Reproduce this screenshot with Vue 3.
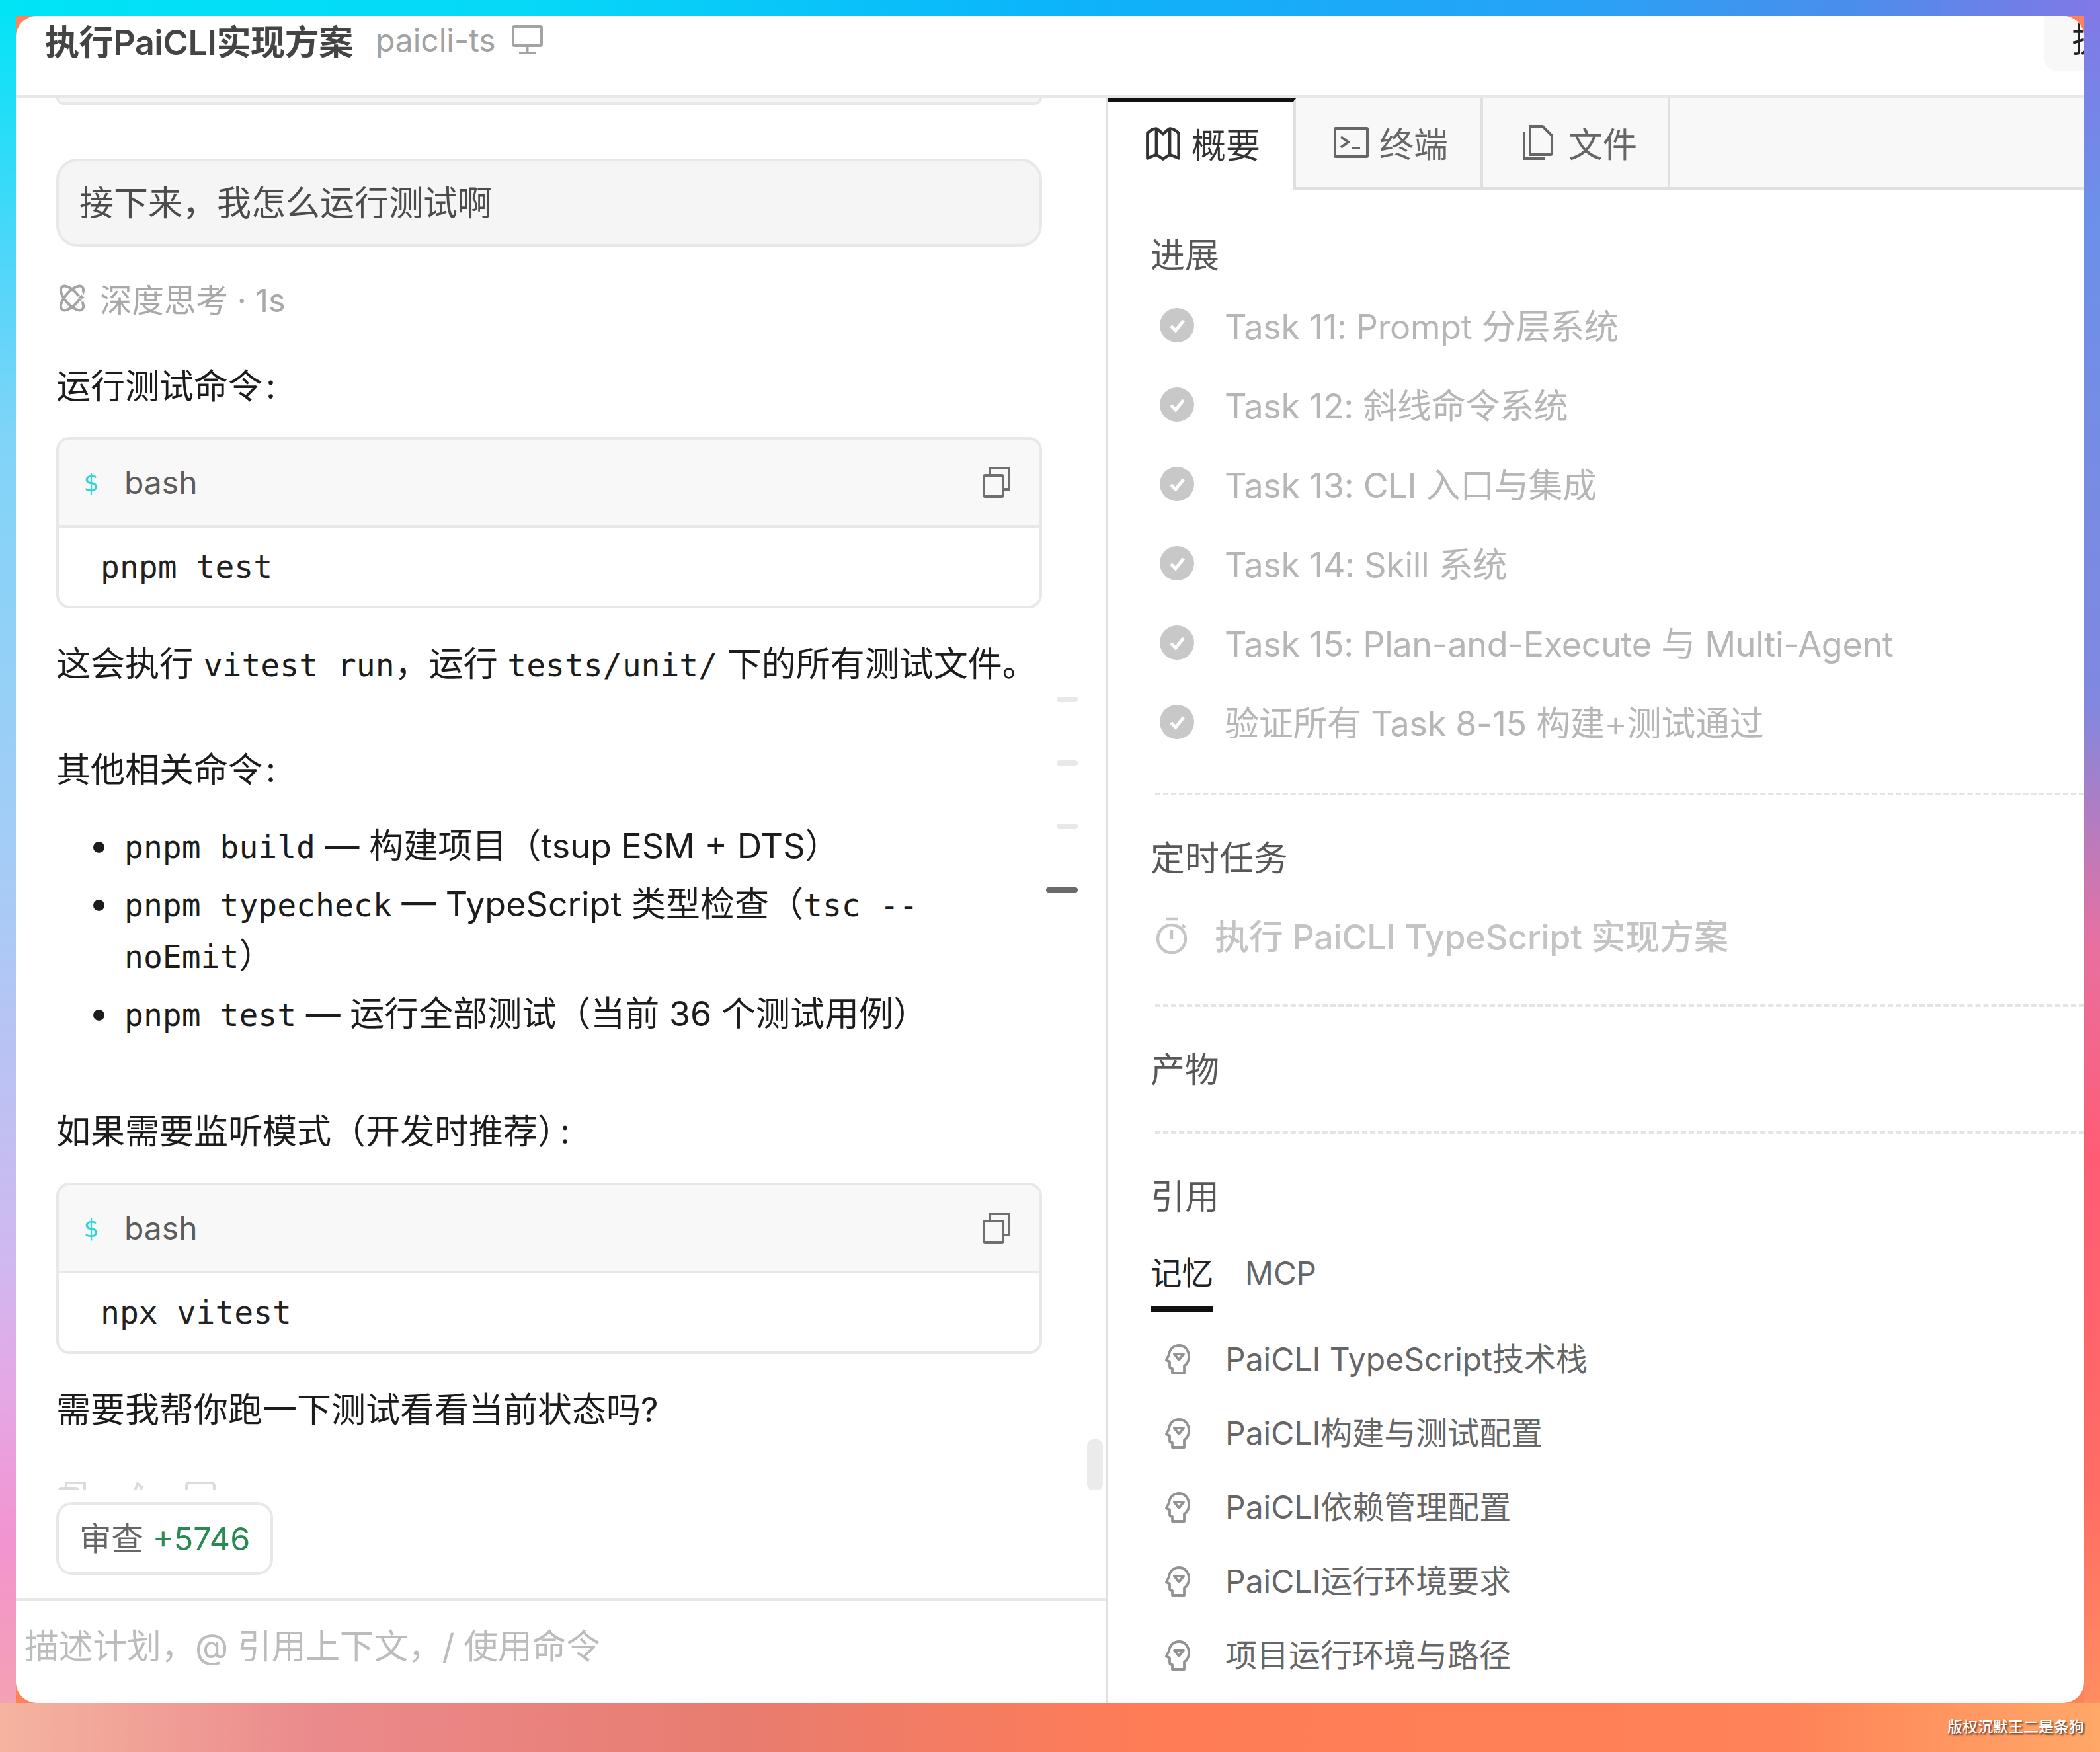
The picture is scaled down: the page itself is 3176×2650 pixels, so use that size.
<script setup>
const tasks = [
  'Task 11: Prompt 分层系统',
  'Task 12: 斜线命令系统',
  'Task 13: CLI 入口与集成',
  'Task 14: Skill 系统',
  'Task 15: Plan-and-Execute 与 Multi-Agent',
  '验证所有 Task 8-15 构建+测试通过',
]
const memories = [
  'PaiCLI TypeScript技术栈',
  'PaiCLI构建与测试配置',
  'PaiCLI依赖管理配置',
  'PaiCLI运行环境要求',
  '项目运行环境与路径',
]
const marks = [
  { id: 1, dark: false },
  { id: 2, dark: false },
  { id: 3, dark: false },
  { id: 4, dark: true },
]
const codeBlocks = { first: 'pnpm test', second: 'npx vitest' }
</script>

<template>
  <div class="page">
    <div class="window">
      <header class="header">
        <div class="heading">
          <span class="title">执行PaiCLI实现方案</span>
          <span class="project">paicli-ts</span>
          <svg class="monitor" viewBox="0 0 47 44" fill="none" stroke="#a4a4a4" stroke-width="4">
            <rect x="2" y="2" width="43" height="29" rx="2" />
            <path d="M23.5 31v11M11 42h25" />
          </svg>
        </div>
        <div class="run-btn">执行方案</div>
      </header>

      <div class="body">
        <section class="left">
          <div class="scroller">
            <div class="prev-tail"></div>
            <div class="bubble">接下来，我怎么运行测试啊</div>
            <div class="thinking">
              <svg class="think-icon" viewBox="0 0 44 42" fill="none" stroke="#a4a4a4" stroke-width="4">
                <ellipse cx="20" cy="21" rx="10" ry="23" transform="rotate(-42 20 21)" />
                <ellipse cx="20" cy="21" rx="10" ry="23" transform="rotate(42 20 21)" />
                <path d="M35 10c1 5 3 8 8 9-5 1-7 4-8 9-1-5-3-8-8-9 5-1 7-4 8-9z" fill="#fff" stroke="none" />
                <path d="M34 14c.6 3 2 5 5 5.500-3 .5-4.400 2.500-5 5.500-.6-3-2-5-5-5.500 3-.5 4.400-2.500 5-5.500z" fill="#a4a4a4" stroke="none" />
              </svg>
              <span>深度思考 · 1s</span>
            </div>
            <p class="para para-first">运行测试命令<span class="colon">:</span></p>
            <div class="code">
              <div class="code-head">
                <span class="dollar">$</span>
                <span class="lang">bash</span>
                <svg class="copy" viewBox="0 0 42 47" fill="none" stroke="#6f6f6f" stroke-width="4">
                  <rect x="2" y="13" width="29" height="32" rx="2" />
                  <path d="M11 13V2h29v32h-9" />
                </svg>
              </div>
              <div class="code-body">{{ codeBlocks.first }}</div>
            </div>
            <p class="para para-after-code">这会执行 <code>vitest run</code>，运行 <code>tests/unit/</code> 下的所有测试文件。</p>
            <p class="para para-section">其他相关命令<span class="colon">:</span></p>
            <ul class="list">
              <li><code>pnpm build</code> — 构建项目（tsup ESM + DTS）</li>
              <li><code>pnpm typecheck</code> — TypeScript 类型检查（<code>tsc --noEmit</code>）</li>
              <li><code>pnpm test</code> — 运行全部测试（当前 36 个测试用例）</li>
            </ul>
            <p class="para para-watch">如果需要监听模式（开发时推荐）<span class="colon-tight">:</span></p>
            <div class="code code-second">
              <div class="code-head">
                <span class="dollar">$</span>
                <span class="lang">bash</span>
                <svg class="copy" viewBox="0 0 42 47" fill="none" stroke="#6f6f6f" stroke-width="4">
                  <rect x="2" y="13" width="29" height="32" rx="2" />
                  <path d="M11 13V2h29v32h-9" />
                </svg>
              </div>
              <div class="code-body">{{ codeBlocks.second }}</div>
            </div>
            <p class="para para-after-code">需要我帮你跑一下测试看看当前状态吗?</p>
            <div class="actions">
              <svg class="act act-a" viewBox="0 0 42 42" fill="none" stroke="#cfcfcf" stroke-width="4"><rect x="2" y="10" width="28" height="30" rx="3" /><path d="M12 10V2h28v28h-8" /></svg>
              <svg class="act act-b" viewBox="0 0 36 42" fill="none" stroke="#cfcfcf" stroke-width="4"><path d="M4 40 18 3l6 5-3 14h12" /></svg>
              <svg class="act act-c" viewBox="0 0 46 42" fill="none" stroke="#cfcfcf" stroke-width="4"><path d="M2 40V6a4 4 0 0 1 4-4h34a4 4 0 0 1 4 4v34" /></svg>
            </div>
            <div class="minimap">
              <span v-for="m in marks" :key="m.id" class="mark" :class="{ dark: m.dark }"></span>
            </div>
            <div class="thumb"></div>
          </div>
          <div class="chip-row">
            <div class="chip">审查 <span class="plus">+5746</span></div>
          </div>
          <div class="composer">描述计划，@ 引用上下文，/ 使用命令</div>
        </section>

        <aside class="right">
          <div class="tabs">
            <div class="tab active">
              <svg class="tab-icon" viewBox="0 0 24 24" fill="none" stroke="#333" stroke-width="2" stroke-linejoin="round">
                <path d="M1.500 5C3 3.500 5.500 2 7.500 2c2 1.200 3.200 2.500 4.500 3.500C13.300 4.500 14.500 3.200 16.500 2c2 0 4.500 1.500 6 3v17l-6-2.500-4.500 3-4.500-3-6 2.500z" />
                <path d="M7.500 2v17.500M16.500 2v17.500" />
              </svg>
              <span>概要</span>
            </div>
            <div class="tab">
              <svg class="tab-icon wide" viewBox="0 0 53 47" fill="none" stroke="#666" stroke-width="4">
                <rect x="2" y="2" width="49" height="43" rx="1" />
                <path d="m11 15 11 8-11 8M27 32h13" />
              </svg>
              <span>终端</span>
            </div>
            <div class="tab">
              <svg class="tab-icon files" viewBox="0 0 46 53" fill="none" stroke="#666" stroke-width="4">
                <path d="M11 2h19l14 14v27a2 2 0 0 1-2 2H11z" />
                <path d="M2 10v41h32" />
              </svg>
              <span>文件</span>
            </div>
            <div class="tab-fill"></div>
          </div>

          <div class="panel">
            <h3 class="sec-title sec-first">进展</h3>
            <div class="task-list">
              <div v-for="t in tasks" :key="t" class="task">
                <svg class="check" viewBox="0 0 52 52">
                  <circle cx="26" cy="26" r="26" fill="#c8c8c8" />
                  <path d="m17 27 7 7 12-15" fill="none" stroke="#fff" stroke-width="5" />
                </svg>
                <span class="row-text">{{ t }}</span>
              </div>
            </div>
            <div class="dash dash-a"></div>
            <h3 class="sec-title">定时任务</h3>
            <div class="timer">
              <svg class="timer-icon" viewBox="0 0 49 56" fill="none" stroke="#c6c6c6" stroke-width="4.500">
                <circle cx="24" cy="33" r="21" />
                <path d="M16 3h17M24 20v14M40 12l4 4" />
              </svg>
              <span class="row-text">执行 PaiCLI TypeScript 实现方案</span>
            </div>
            <div class="dash dash-b"></div>
            <h3 class="sec-title">产物</h3>
            <div class="dash dash-c"></div>
            <h3 class="sec-title">引用</h3>
            <div class="subtabs">
              <span class="subtab on">记忆</span>
              <span class="subtab">MCP</span>
            </div>
            <div class="mem-list">
              <div v-for="m in memories" :key="m" class="mem">
                <svg class="head" viewBox="0 0 38 46" fill="none" stroke="#929292" stroke-width="3.800" stroke-linejoin="round">
                  <path d="M29 44V33c5-3 7-8 7-14C36 9 30 2 21 2 12 2 7 8 6 16l-4 8 5 3v7q0 3 4 3v7z" />
                  <path d="M14 15h14l-7 9z" />
                </svg>
                <span class="mem-text">{{ m }}</span>
              </div>
            </div>
          </div>
        </aside>
      </div>
    </div>
    <footer class="footer">版权沉默王二是条狗</footer>
  </div>
</template>

<style scoped>
.page {
  width: 3176px;
  height: 2650px;
  box-sizing: border-box;
  padding: 24px 24px 0;
  display: flex;
  flex-direction: column;
  font-family: Inter, "Noto Sans CJK SC", sans-serif;
  background:
    linear-gradient(90deg, #00e4f6 0%, #06d8f8 25%, #0cb4fa 50%, #28a2f6 75%, #4a8eec 88%, #8278e6 100%) 0 0 / 100% 24px no-repeat,
    linear-gradient(90deg, #f5b4a0 0%, #eb8a8c 15%, #e87c70 35%, #ff7c56 55%, #ff8258 85%, #ffa868 100%) 0 100% / 100% 74px no-repeat,
    linear-gradient(180deg, #00e4f6 0%, #50d6fa 15%, #80d4f8 25%, #a6ccf6 50%, #d0b8f0 72%, #e6a6e4 80%, #f294d0 88%, #f5a0b4 97%, #f5b4a0 100%) 0 0 / 24px 100% no-repeat,
    linear-gradient(180deg, #8278e6 0%, #6c90e8 12%, #8088e0 40%, #e870a0 54%, #ff5c74 66%, #ff6c64 85%, #ff8c60 97%, #ffa868 100%) 100% 0 / 24px 100% no-repeat,
    #ff8258;
}
.window {
  height: 2552px;
  flex: none;
  background: #fff;
  border-radius: 32px;
  overflow: hidden;
  display: flex;
  flex-direction: column;
}
.header {
  flex: none;
  height: 124px;
  box-sizing: border-box;
  border-bottom: 4px solid #e8e8e8;
  display: flex;
  align-items: flex-start;
  padding-left: 44px;
}
.heading {
  flex: 1;
  display: flex;
  align-items: center;
  height: 72px;
}
.title {
  font-size: 52px;
  font-weight: 600;
  letter-spacing: -0.4px;
  color: #444;
}
.project {
  margin-left: 34px;
  font-size: 48px;
  color: #a2a2a2;
}
.monitor {
  margin-left: 24px;
  width: 47px;
  height: 44px;
}
.run-btn {
  flex: none;
  width: 60px;
  height: 84px;
  box-sizing: border-box;
  padding-left: 41px;
  background: #f8f8f8;
  border-bottom-left-radius: 20px;
  overflow: hidden;
  white-space: nowrap;
  font-size: 52px;
  line-height: 74px;
  color: #222;
}
.body {
  flex: 1;
  min-height: 0;
  display: flex;
}
.left {
  flex: none;
  width: 1648px;
  display: flex;
  flex-direction: column;
}
.scroller {
  flex: 1;
  min-height: 0;
  overflow: hidden;
  position: relative;
  padding: 0 96px 0 61px;
}
.prev-tail {
  height: 11px;
  box-sizing: border-box;
  background: #f5f5f5;
  border: 4px solid #e8e8e8;
  border-top: none;
  border-radius: 0 0 32px 32px;
}
.bubble {
  margin-top: 81px;
  height: 133px;
  box-sizing: border-box;
  padding: 0 31px;
  background: #f5f5f5;
  border: 4px solid #e8e8e8;
  border-radius: 32px;
  font-size: 52px;
  line-height: 127px;
  color: #4c4c4c;
}
.thinking {
  margin-top: 48px;
  height: 60px;
  display: flex;
  align-items: center;
  gap: 18px;
  padding-left: 4px;
  font-size: 48.500px;
  color: #a8a8a8;
}
.think-icon {
  width: 44px;
  height: 42px;
}
.para {
  margin: 0;
  font-size: 52px;
  line-height: 78px;
  color: #1c1c1c;
}
.colon {
  margin-left: 5px;
}
.colon-tight {
  margin-left: -18px;
}
.para-first { margin-top: 65px; }
.para-after-code { margin-top: 46px; }
.para-section { margin-top: 82px; }
.para-watch { margin-top: 100px; }
code {
  font-family: "DejaVu Sans Mono", "Noto Sans CJK SC", monospace;
  font-size: 48px;
  line-height: 1;
}
.code {
  margin-top: 37px;
  border: 4px solid #e8e8e8;
  border-radius: 20px;
  overflow: hidden;
}
.code-second { margin-top: 38px; }
.code-head {
  height: 133px;
  box-sizing: border-box;
  border-bottom: 4px solid #e8e8e8;
  background: #f8f8f8;
  display: flex;
  align-items: center;
  padding: 0 44px 0 37px;
}
.dollar {
  width: 62px;
  font-family: "DejaVu Sans Mono", monospace;
  font-size: 38px;
  color: #2dd4dc;
}
.lang {
  flex: 1;
  font-size: 48px;
  color: #5c5c5c;
}
.copy {
  width: 42px;
  height: 47px;
}
.code-body {
  height: 118px;
  box-sizing: border-box;
  padding-left: 63px;
  font-family: "DejaVu Sans Mono", monospace;
  font-size: 48px;
  line-height: 118px;
  color: #222;
}
.list {
  margin: 37px 0 0;
  padding-left: 103px;
  list-style: none;
  font-size: 52px;
  line-height: 78px;
  color: #1c1c1c;
}
.list li {
  position: relative;
}
.list li::before {
  content: "";
  position: absolute;
  left: -47px;
  top: 32px;
  width: 17px;
  height: 17px;
  border-radius: 50%;
  background: #1c1c1c;
}
.list li + li {
  margin-top: 10px;
}
.actions {
  margin-top: 69px;
  display: flex;
  height: 42px;
  opacity: 0.75;
  padding-left: 3px;
}
.act {
  height: 42px;
  flex: none;
}
.act-a { width: 42px; }
.act-b { width: 36px; margin-left: 60px; }
.act-c { width: 46px; margin-left: 54px; }
.minimap {
  position: absolute;
  right: 42px;
  top: 906px;
  width: 48px;
  display: flex;
  flex-direction: column;
  align-items: flex-end;
  gap: 88px;
}
.mark {
  width: 32px;
  height: 8px;
  border-radius: 4px;
  background: #e8e8e8;
}
.mark.dark {
  width: 48px;
  background: #6a6a6a;
}
.thumb {
  position: absolute;
  right: 4px;
  top: 2028px;
  width: 24px;
  height: 80px;
  border-radius: 12px;
  background: #ebebeb;
}
.chip-row {
  flex: none;
  padding: 19px 0 35px 61px;
}
.chip {
  display: inline-block;
  height: 110px;
  box-sizing: border-box;
  padding: 0 31px;
  border: 4px solid #e8e8e8;
  border-radius: 24px;
  font-size: 48.500px;
  line-height: 104px;
  color: #666;
}
.plus {
  color: #288a50;
}
.composer {
  flex: none;
  height: 159px;
  box-sizing: border-box;
  border-top: 4px solid #e8e8e8;
  padding: 31px 0 0 13px;
  font-size: 52px;
  letter-spacing: -0.4px;
  line-height: 78px;
  color: #bcbcbc;
}
.right {
  flex: 1;
  min-width: 0;
  border-left: 4px solid #e0e0e0;
  display: flex;
  flex-direction: column;
}
.tabs {
  flex: none;
  height: 139px;
  display: flex;
  background: #f8f8f8;
}
.tab {
  flex: none;
  width: 283px;
  box-sizing: border-box;
  border-right: 4px solid #e0e0e0;
  border-bottom: 4px solid #e0e0e0;
  display: flex;
  align-items: center;
  gap: 16px;
  padding-left: 57px;
  font-size: 52px;
  color: #666;
}
.tab.active {
  width: 284px;
  padding-left: 56px;
  background: #fff;
  border-bottom: none;
  border-top: 6px solid #111;
  color: #333;
  padding-bottom: 8px;
}
.tab-fill {
  flex: 1;
  border-bottom: 4px solid #e0e0e0;
}
.tab-icon {
  width: 54px;
  height: 54px;
  flex: none;
}
.tab-icon.wide {
  width: 53px;
  height: 47px;
}
.tab-icon.files {
  width: 46px;
  height: 53px;
  margin: 0 7px 0 3px;
}
.panel {
  flex: 1;
  min-height: 0;
  overflow: hidden;
  padding-left: 64px;
}
.sec-title {
  margin: 59px 0 0;
  height: 70px;
  font-size: 52px;
  font-weight: 400;
  line-height: 74px;
  color: #585858;
}
.sec-first {
  margin-top: 63px;
}
.task-list {
  margin-top: 12px;
}
.task {
  height: 120px;
  display: flex;
  align-items: center;
  gap: 46px;
  padding-left: 14px;
  font-size: 52px;
  letter-spacing: -0.3px;
  color: #b6b6b6;
}
.row-text {
  padding-bottom: 4px;
}
.check {
  width: 52px;
  height: 52px;
  flex: none;
}
.dash {
  margin-left: 7px;
  border-top: 4px dashed #e4e4e4;
}
.dash-a { margin-top: 47px; }
.dash-b { margin-top: 44px; }
.dash-c { margin-top: 59px; }
.timer {
  margin-top: 23px;
  height: 120px;
  display: flex;
  align-items: center;
  gap: 40px;
  padding-left: 8px;
  font-size: 52px;
  font-weight: 500;
  letter-spacing: -0.2px;
  color: #c4c4c4;
}
.timer-icon {
  width: 49px;
  height: 56px;
  flex: none;
}
.subtabs {
  margin-top: 52px;
  display: flex;
  gap: 48px;
}
.subtab {
  height: 88px;
  box-sizing: border-box;
  font-size: 47.500px;
  line-height: 60px;
  color: #666;
}
.subtab.on {
  color: #222;
  border-bottom: 8px solid #111;
}
.mem-list {
  margin-top: 16px;
}
.mem {
  height: 112px;
  display: flex;
  align-items: center;
  gap: 53px;
  padding-left: 22px;
  font-size: 48px;
  color: #666;
}
.mem-text {
  padding-bottom: 8px;
}
.head {
  width: 38px;
  height: 46px;
  flex: none;
}
.footer {
  flex: 1;
  text-align: right;
  font-size: 23px;
  font-weight: 500;
  line-height: 72px;
  color: #fff;
  text-shadow: 2px 2px 3px rgba(70, 30, 20, 0.9);
}
</style>
